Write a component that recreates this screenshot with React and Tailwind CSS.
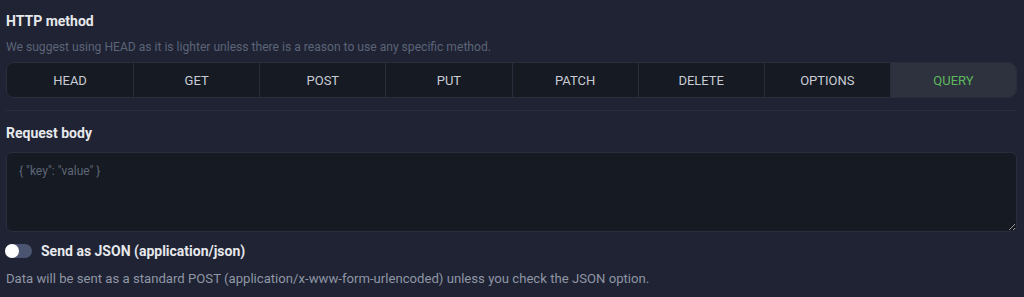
import React, { useState } from 'react';

const METHODS = ['HEAD', 'GET', 'POST', 'PUT', 'PATCH', 'DELETE', 'OPTIONS', 'QUERY'];

const MethodPicker = ({ value, onChange }) => (
  <div className="mt-[7px] grid h-[36px] grid-cols-8 overflow-hidden rounded-[8px] border border-[#2a2e3c] bg-[#151a23]">
    {METHODS.map((m, i) => (
      <button
        key={m}
        type="button"
        onClick={() => onChange(m)}
        className={
          (i > 0 ? 'border-l border-[#2a2e3c] ' : '') +
          (value === m ? 'bg-[#2e323f] text-[#5cb85c] ' : 'text-[#c9ccd3] ') +
          'text-[13px] leading-none'
        }
      >
        {m}
      </button>
    ))}
  </div>
);

export default function App() {
  const [method, setMethod] = useState('QUERY');
  const [json, setJson] = useState(false);

  return (
    <div className="h-[297px] w-full bg-[#1f2333] pl-[6px] pr-[7px] pt-[12px] font-['Roboto','Liberation_Sans',sans-serif]">
      <h2 className="text-[14px] font-bold leading-[18px] text-[#e6e8ec]">HTTP method</h2>
      <p className="mt-[9px] text-[12.1px] leading-[16px] text-[#5c6478]">
        We suggest using HEAD as it is lighter unless there is a reason to use any specific method.
      </p>

      <MethodPicker value={method} onChange={setMethod} />

      <div className="mt-[12px] h-px bg-[#2a2e3c]" />

      <h2 className="mt-[13px] text-[14px] font-bold leading-[18px] text-[#e6e8ec]">Request body</h2>
      <textarea
        placeholder='{ "key": "value" }'
        className="mt-[10px] block h-[80px] w-full rounded-[6px] border border-[#2a2e3c] bg-[#151a23] px-[12px] py-[10px] text-[12px] leading-[16px] text-[#c9ccd3] outline-none placeholder:text-[#5f6675]"
      />

      <label className="mt-[9px] flex h-[20px] cursor-pointer items-center gap-[9px]">
        <button
          type="button"
          onClick={() => setJson(!json)}
          className={
            'relative -ml-px flex h-[14px] w-[27px] items-center rounded-full ' +
            (json ? 'bg-[#5cb85c] justify-end' : 'bg-[#4b5470] justify-start')
          }
        >
          <span className="h-[14px] w-[14px] rounded-full bg-white" />
        </button>
        <span className="text-[14px] font-bold text-[#e6e8ec]">Send as JSON (application/json)</span>
      </label>

      <p className="mt-[10px] text-[13.15px] leading-[16px] text-[#8f96a5]">
        Data will be sent as a standard POST (application/x-www-form-urlencoded) unless you check the JSON option.
      </p>
    </div>
  );
}
